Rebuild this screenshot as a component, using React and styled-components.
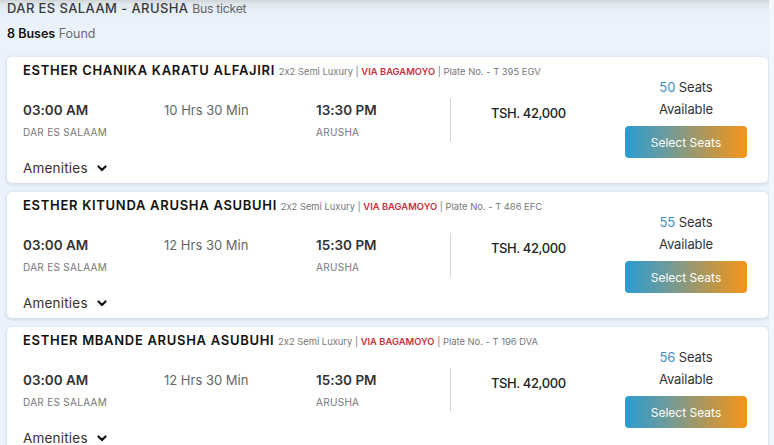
import React from "react";
import styled, { createGlobalStyle } from "styled-components";

const Global = createGlobalStyle`
  html, body { margin: 0; padding: 0; }
  body {
    background: #eaf3fc;
    font-family: Inter, "Open Sans", Arial, sans-serif;
    font-feature-settings: "calt" 0;
    overflow: hidden;
  }
`;

const Frame = styled.div`
  display: flex;
  width: 774px;
  height: 445px;
  overflow: hidden;
`;

const Page = styled.main`
  flex: 1;
  padding: 0 1px 0 7px;
  background: linear-gradient(to bottom, #cfd4d8 0px, #dfe6ec 4px, #e6eef6 10px, #eaf3fc 20px);
`;

const Gutter = styled.div`
  width: 5px;
  background: #f2f7fc;
`;

const Title = styled.h1`
  margin: 0;
  font-size: 13px;
  line-height: 17px;
  font-weight: 500;
  color: #3a3a3a;
  letter-spacing: 0.4px;
  span { font-size: 12.3px; font-weight: 400; color: #666; letter-spacing: -0.3px; }
`;

const Found = styled.div`
  margin-top: 8px;
  font-size: 12.5px;
  line-height: 18px;
  color: #6a6a6a;
  letter-spacing: 0;
  b { font-weight: 600; color: #111; }
`;

const List = styled.div`
  margin-top: 14px;
  display: flex;
  flex-direction: column;
  gap: 9px;
`;

const Card = styled.article`
  display: flex;
  background: #fff;
  border-radius: 5px;
  box-shadow: 0 1px 4px rgba(40, 60, 90, 0.18);
  height: 126px;
  box-sizing: border-box;
  padding: 5px 21px 5px 16px;
`;

const Main = styled.div`
  flex: 1;
  display: flex;
  flex-direction: column;
`;

const Header = styled.div`
  font-size: 9.4px;
  line-height: 16px;
  color: #777;
  white-space: nowrap;
  letter-spacing: 0;
`;

const Name = styled.span`
  font-size: 13px;
  font-weight: 600;
  color: #111;
  letter-spacing: 0.7px;
  margin-right: 1px;
`;

const Via = styled.span`
  color: #c8303c;
  font-weight: 600;
`;

const Info = styled.div`
  display: flex;
  align-items: flex-start;
  margin-top: 18px;
  height: 45px;
`;

const Col = styled.div`
  width: ${(p) => p.$w}px;
  padding-top: 2px;
`;

const Time = styled.div`
  font-size: ${(p) => (p.$light ? 13 : 13.5)}px;
  line-height: 20px;
  font-weight: ${(p) => (p.$light ? 400 : 600)};
  color: ${(p) => (p.$light ? "#666" : "#333")};
  letter-spacing: 0;
`;

const City = styled.div`
  margin-top: 5px;
  font-size: 10px;
  line-height: 14px;
  color: #777;
  letter-spacing: 0.3px;
`;

const Divider = styled.div`
  width: 1px;
  align-self: stretch;
  background: #d6d6d6;
`;

const Price = styled.div`
  padding: 5px 0 0 40px;
  font-size: 13px;
  line-height: 20px;
  font-weight: 500;
  color: #222;
  letter-spacing: -0.4px;
`;

const Amenities = styled.button`
  margin-top: 16px;
  align-self: flex-start;
  display: flex;
  align-items: center;
  gap: 9px;
  padding: 0;
  border: 0;
  background: none;
  font-family: inherit;
  font-size: 13.5px;
  line-height: 20px;
  color: #333;
  letter-spacing: 0.2px;
`;

const Side = styled.div`
  width: 122px;
  padding-top: 14px;
  display: flex;
  flex-direction: column;
  align-items: center;
`;

const Seats = styled.div`
  font-size: 13px;
  line-height: 22px;
  color: #333;
  text-align: center;
  letter-spacing: -0.1px;
  span { color: #3a8fc2; }
`;

const SelectButton = styled.button`
  margin-top: 6px;
  width: 122px;
  height: 32px;
  border: 0;
  border-radius: 4px;
  background: linear-gradient(to right, #2a9bd1 0%, #6f9b9a 35%, #b99650 70%, #f7951a 100%);
  color: #fff;
  font-family: inherit;
  font-size: 12px;
  letter-spacing: 0;
`;

const Chevron = () => (
  <svg width="10" height="7" viewBox="0 0 10 7">
    <polyline points="1.5,1.5 5,5 8.5,1.5" fill="none" stroke="#111" strokeWidth="2.2" strokeLinecap="round" strokeLinejoin="round" />
  </svg>
);

const buses = [
  { name: "ESTHER CHANIKA KARATU ALFAJIRI", plate: "T 395 EGV", dur: "10 Hrs 30 Min", arr: "13:30 PM", seats: 50 },
  { name: "ESTHER KITUNDA ARUSHA ASUBUHI", plate: "T 486 EFC", dur: "12 Hrs 30 Min", arr: "15:30 PM", seats: 55 },
  { name: "ESTHER MBANDE ARUSHA ASUBUHI", plate: "T 196 DVA", dur: "12 Hrs 30 Min", arr: "15:30 PM", seats: 56 },
];

export default function App() {
  return (
    <Frame>
      <Global />
      <Page>
        <Title>
          DAR ES SALAAM - ARUSHA <span>Bus ticket</span>
        </Title>
        <Found>
          <b>8 Buses</b> Found
        </Found>
        <List>
          {buses.map((b) => (
            <Card key={b.plate}>
              <Main>
                <Header>
                  <Name>{b.name}</Name> 2x2 Semi Luxury | <Via>VIA BAGAMOYO</Via> | Plate No. - {b.plate}
                </Header>
                <Info>
                  <Col $w={141}>
                    <Time>03:00 AM</Time>
                    <City>DAR ES SALAAM</City>
                  </Col>
                  <Col $w={152}>
                    <Time $light>{b.dur}</Time>
                  </Col>
                  <Col $w={134}>
                    <Time>{b.arr}</Time>
                    <City>ARUSHA</City>
                  </Col>
                  <Divider />
                  <Price>TSH. 42,000</Price>
                </Info>
                <Amenities>
                  Amenities <Chevron />
                </Amenities>
              </Main>
              <Side>
                <Seats>
                  <span>{b.seats}</span> Seats
                  <br />
                  Available
                </Seats>
                <SelectButton>Select Seats</SelectButton>
              </Side>
            </Card>
          ))}
        </List>
      </Page>
      <Gutter />
    </Frame>
  );
}
